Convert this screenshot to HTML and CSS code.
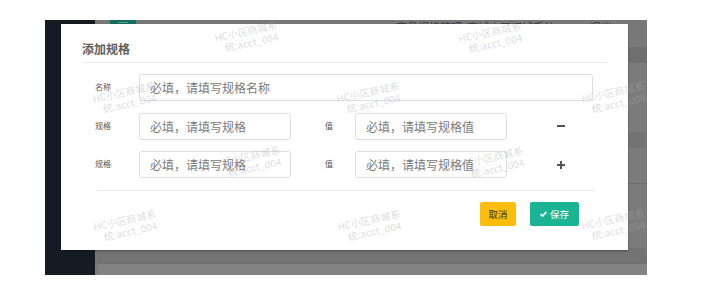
FILE: index.html
```html
<!DOCTYPE html>
<html lang="zh-CN">
<head>
  <meta charset="UTF-8">
  <meta name="viewport" content="width=device-width, initial-scale=1.0">
  <title>添加规格</title>
  <link rel="stylesheet" href="styles.css">
</head>
<body>
  <div class="frame">
    <div class="sidebar"></div>
    <div class="main">
      <div class="topbar">
        <span class="tab"><i></i></span>
        <span class="crumb c1">商品规格管理</span>
        <span class="crumb c2">商城小区商城系统</span>
        <span class="crumb c3">退出</span>
      </div>
      <div class="tabs"></div>
      <div class="content">
        <div class="band b1"></div>
        <div class="band b2"></div>
        <div class="band b3"></div>
        <div class="panel"></div>
      </div>
    </div>

    <div class="modal">
      <div class="modal-header">
        <h4 class="modal-title">添加规格</h4>
      </div>
      <div class="modal-body">
        <div class="form-row">
          <label class="label">名称</label>
          <input class="input wide" type="text" placeholder="必填，请填写规格名称">
        </div>
        <div class="form-row">
          <label class="label">规格</label>
          <input class="input" type="text" placeholder="必填，请填写规格">
          <label class="label value">值</label>
          <input class="input" type="text" placeholder="必填，请填写规格值">
          <span class="row-action">
            <svg width="8" height="8" viewBox="0 0 8 8"><rect x="0" y="3" width="8" height="2" fill="#555"/></svg>
          </span>
        </div>
        <div class="form-row">
          <label class="label">规格</label>
          <input class="input" type="text" placeholder="必填，请填写规格">
          <label class="label value">值</label>
          <input class="input" type="text" placeholder="必填，请填写规格值">
          <span class="row-action">
            <svg width="8" height="8" viewBox="0 0 8 8"><rect x="0" y="3" width="8" height="2" fill="#555"/><rect x="3" y="0" width="2" height="8" fill="#555"/></svg>
          </span>
        </div>
        <div class="modal-footer">
          <button class="btn btn-warning">取消</button>
          <button class="btn btn-primary">
            <svg width="7" height="6" viewBox="0 0 7 6"><path d="M0.6 3.1 L2.6 5.1 L6.4 0.9" fill="none" stroke="#fff" stroke-width="1.6"/></svg>
            保存
          </button>
        </div>
      </div>
    </div>

    <div class="watermarks">
      <div class="wm" style="left:202px;top:17px">HC小区商城系<br><span>统:acct_004</span></div>
      <div class="wm" style="left:446px;top:18px">HC小区商城系<br><span>统:acct_004</span></div>
      <div class="wm" style="left:80px;top:78px">HC小区商城系<br><span>统:acct_004</span></div>
      <div class="wm" style="left:324px;top:78px">HC小区商城系<br><span>统:acct_004</span></div>
      <div class="wm" style="left:569px;top:78px">HC小区商城系<br><span>统:acct_004</span></div>
      <div class="wm" style="left:205px;top:142px">HC小区商城系<br><span>统:acct_004</span></div>
      <div class="wm" style="left:448px;top:143px">HC小区商城系<br><span>统:acct_004</span></div>
      <div class="wm" style="left:81px;top:206px">HC小区商城系<br><span>统:acct_004</span></div>
      <div class="wm" style="left:325px;top:206px">HC小区商城系<br><span>统:acct_004</span></div>
      <div class="wm" style="left:569px;top:205px">HC小区商城系<br><span>统:acct_004</span></div>
    </div>
  </div>
</body>
</html>
```

FILE: styles.css
```css
* { box-sizing: border-box; font-family: "Noto Sans CJK SC", "Noto Sans", sans-serif; }
body { margin: 0; background: #fff; }

.frame { position: relative; margin: 20px 0 0 45px; width: 602px; height: 255px; display: flex; }
.sidebar { flex: none; width: 50px; background: #151b23; }
.main { flex: 1; min-width: 0; overflow: hidden; display: flex; flex-direction: column; background: #7b7b7b; }

.topbar { flex: none; height: 27px; background: #787878; display: flex; align-items: flex-start; font-size: 11px; line-height: 12px; color: #3a3a3a; overflow: hidden; }
.tab { flex: none; width: 26px; height: 27px; margin-left: 15px; background: #12705e; display: flex; justify-content: center; }
.tab i { width: 10px; height: 1px; margin-top: 2px; background: #5d9c90; }
.crumb { margin-top: 1px; white-space: nowrap; }
.c1 { margin-left: 260px; }
.c2 { margin-left: 5px; }
.c3 { margin-left: 35px; }
.tabs { flex: none; height: 16px; background: #6f6f6f; }
.content { flex: 1; display: flex; flex-direction: column; }
.band { flex: none; background: #737373; }
.b1 { height: 16px; margin-top: 69px; }
.b2 { height: 1px; margin-top: 35px; background: #6c6c6c; }
.b3 { height: 15px; margin-top: 64px; }
.panel { flex: 1; margin-left: 3px; background: #838383; border-top: 1px solid #6e6e6e; }

.modal { position: absolute; left: 16px; top: 4px; width: 567px; height: 226px; background: #fff; box-shadow: 0 1px 2px rgba(0,0,0,0.35); }
.modal-header { margin: 0 21px; padding: 17px 0 5px; border-bottom: 1px solid #e7eaec; }
.modal-title { margin: 0; font-size: 12px; line-height: 16px; font-weight: 700; color: #5e5e5e; }
.modal-body { padding: 11px 34px 0 34px; }

.form-row { display: flex; align-items: center; height: 27px; margin-bottom: 11.5px; }
.label { width: 44px; font-size: 8px; color: #555; margin-top: -2px; }
.label.value { width: 30px; margin-left: 34px; }
.input { width: 152px; height: 27px; padding: 0 10px; border: 1px solid #dcdfe1; border-radius: 3px; font-size: 12px; color: #555; background: #fff; outline: none; }
.input.wide { width: 454px; }
.input::placeholder { color: #7a7a7a; }
.row-action { margin-left: 50px; width: 8px; height: 8px; display: flex; }

.modal-footer { margin: 0 0 0 2px; padding: 11px 15px 0 0; border-top: 1px solid #e7eaec; display: flex; justify-content: flex-end; gap: 14px; }
.btn { height: 24px; border: none; border-radius: 2px; font-size: 9.5px; display: flex; align-items: center; justify-content: center; gap: 3px; padding: 0; cursor: pointer; }
.btn-warning { width: 36px; background: #fcbd0b; color: #3b3210; }
.btn-primary { width: 49px; background: #1ab394; color: #fff; }

.watermarks { position: absolute; inset: 0; pointer-events: none; }
.wm { position: absolute; transform: translate(-50%, -50%) rotate(-12deg); font-size: 10px; line-height: 12px; color: rgba(170,170,170,0.42); white-space: nowrap; text-align: left; }
.wm span { padding-left: 8px; }
```
